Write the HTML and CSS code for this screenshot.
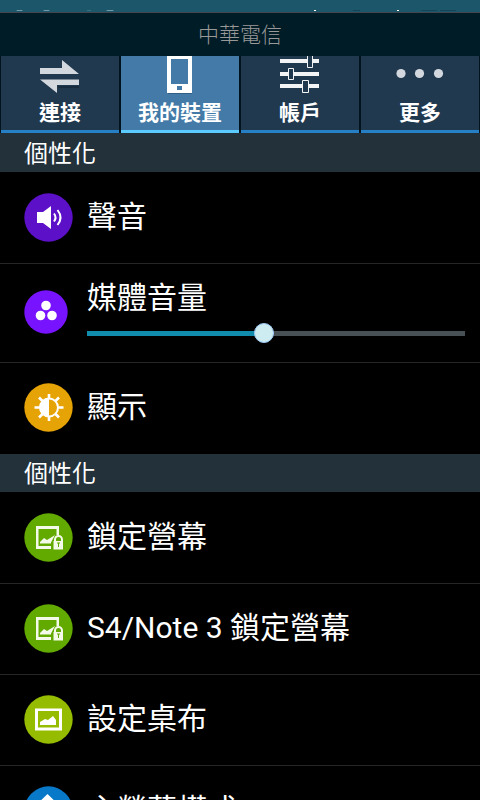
FILE: index.html
```html
<!DOCTYPE html>
<html lang="zh-Hant">
<head>
<meta charset="utf-8">
<meta name="viewport" content="width=device-width, initial-scale=1">
<title>設定</title>
<link rel="stylesheet" href="styles.css">
</head>
<body>
<div class="app">
  <div class="status" aria-hidden="true">
    <svg width="120" height="12" viewBox="0 0 120 12"><g fill="#a9c3cc"><path d="M17 10h5v1h-5zM44 10h5v1h-5zM107 10h6v1h-6z"/><path fill="#4d7f90" d="M16 10h7v1h-7zM43 10h7v1h-7zM87 10h4v1h-4zM106 10h8v1h-8z" opacity=".6"/></g></svg>
    <svg width="170" height="12" viewBox="0 0 170 12"><path fill="#fff" d="M4 10h2v1h-2zM87 10h2v1h-2z"/><path fill="#134556" d="M43 10h7v1h-7zM111 10h16v1h-16zM130 10h16v1h-16z"/></svg>
  </div>
  <header class="carrier">中華電信</header>
  <nav class="tabs">
    <button class="tab" type="button">
      <svg class="tab-icon" width="48" height="48" viewBox="0 0 48 48"><path fill="#101f30" opacity=".5" d="M22 39h21v2H22zM4 23h20v1H4z"/><path fill="#d3d8de" d="M4 21h22v-8L43 27H4zM43 38H21v8L4 32.500h39z"/></svg>
      <span>連接</span>
    </button>
    <button class="tab active" type="button">
      <svg class="tab-icon" width="48" height="48" viewBox="0 0 48 48"><path fill="#274b68" opacity=".6" d="M12 45h24v2H12z"/><path fill="#fff" fill-rule="evenodd" d="M11 6h25v40H11zM15 12v25h17V12zM21 39v4h5v-4z"/></svg>
      <span>我的裝置</span>
    </button>
    <button class="tab" type="button">
      <svg class="tab-icon" width="48" height="48" viewBox="0 0 48 48"><path fill="#f2f4f6" d="M4 12h39v4H4zM4 25h39v4H4zM4 37h39v4H4z"/><g fill="#20394f" stroke="#f2f4f6" stroke-width="1"><path d="M31.500 6.500h5v14h-5zM12.500 21.500h5v11h-5zM26.500 33.500h6v12h-6z"/></g></svg>
      <span>帳戶</span>
    </button>
    <button class="tab" type="button">
      <svg class="tab-icon" width="48" height="48" viewBox="0 0 48 48"><g fill="#d3d8de"><circle cx="5" cy="26.500" r="4.600"/><circle cx="23.500" cy="26.500" r="4.600"/><circle cx="42.500" cy="26.500" r="4.600"/></g></svg>
      <span>更多</span>
    </button>
  </nav>
  <main>
    <h2>個性化</h2>
    <ul class="list">
      <li><a class="row" href="#sound">
        <svg class="icon" width="49" height="49" viewBox="0 0 49 49"><circle cx="24.500" cy="24.500" r="24.200" fill="#5c10c8"/><path fill="#fff" d="M13 19h6l8-6v23l-8-6h-6z"/><path fill="none" stroke="#fff" stroke-width="2" d="M30 20.500q3 4 0 8M33.500 17q6 7.500 0 15"/></svg>
        <span class="label">聲音</span></a></li>
      <li><div class="row volume">
        <svg class="icon" width="49" height="44" viewBox="0 0 49 44"><circle cx="22" cy="22" r="21.700" fill="#7713ff"/><g fill="#fff"><circle cx="22" cy="15.500" r="4.800"/><circle cx="16.500" cy="25.500" r="4.800"/><circle cx="28" cy="25.500" r="4.800"/></g></svg>
        <div class="field"><label class="label" for="media">媒體音量</label><input id="media" type="range" min="0" max="15" value="7"></div>
      </div></li>
      <li><a class="row" href="#display">
        <svg class="icon" width="49" height="49" viewBox="0 0 49 49"><circle cx="24.500" cy="24.500" r="24.200" fill="#e6a305"/><path stroke="#fff" stroke-width="2.600" d="M25 11v5M25 33v5M10.500 24.500h5M34.500 24.500h5M15 14.500l4 4M31 30.500l4 4M35 14.500l-4 4M19 30.500l-4 4"/><circle cx="25" cy="24.500" r="9" fill="#e6a305" stroke="#fff" stroke-width="2"/><path fill="#fff" d="M25 15a9.500 9.500 0 0 0 0 19z"/></svg>
        <span class="label">顯示</span></a></li>
    </ul>
    <h2>個性化</h2>
    <ul class="list">
      <li><a class="row" href="#lock">
        <svg class="icon" width="49" height="49" viewBox="0 0 49 49"><circle cx="24.500" cy="24.500" r="24.200" fill="#62a900"/><g id="lock-art"><path fill="#f4faea" d="M12 13h23v9h-2.500v-6h-18v17H27v3H12z"/><path fill="#f4faea" d="M16 29l4-4 3 2 8-5-4 7.500v1H16z"/><path fill="none" stroke="#f4faea" stroke-width="2" d="M31 29v-2.500a3.500 3.500 0 0 1 7 0V29"/><path fill="#f4faea" fill-rule="evenodd" d="M29.500 28H39v8.500h-9.500zM33 30.500h1v3.500h1v-3.500h1v-1h-3z"/></g></svg>
        <span class="label">鎖定營幕</span></a></li>
      <li><a class="row" href="#note-lock">
        <svg class="icon" width="49" height="49" viewBox="0 0 49 49"><circle cx="24.500" cy="24.500" r="24.200" fill="#62a900"/><use href="#lock-art"/></svg>
        <span class="label">S4/Note 3 鎖定營幕</span></a></li>
      <li><a class="row" href="#wallpaper">
        <svg class="icon" width="49" height="49" viewBox="0 0 49 49"><circle cx="24.500" cy="24.500" r="24.200" fill="#96bc00"/><path fill="#fff" fill-rule="evenodd" d="M11 13.500h27v22H11zM14 16v16.500h21V16z"/><path fill="#fff" d="M16 30v-3l5-3 3 1 5-4 3 4v5z"/></svg>
        <span class="label">設定桌布</span></a></li>
      <li><a class="row" href="#home">
        <svg class="icon" width="49" height="49" viewBox="0 0 49 49"><circle cx="24.500" cy="24.500" r="24.200" fill="#0878c8"/><path fill="#fff" d="M23.500 8L38 22h-4v13H13V22H9z"/></svg>
        <span class="label">主螢幕模式</span></a></li>
    </ul>
  </main>
</div>
</body>
</html>
```
FILE: styles.css
```css
* {
  box-sizing: border-box;
}

body {
  margin: 0;
  background: #000;
  color: #fff;
  font-family: Roboto, "Noto Sans CJK TC", sans-serif;
}

.app {
  display: flex;
  flex-direction: column;
  height: 100vh;
  overflow: hidden;
}

.status {
  display: flex;
  flex: none;
  justify-content: space-between;
  background: #1c566b;
  border-bottom: 1px solid #42474f;
}

.status svg {
  display: block;
}

.carrier {
  flex: none;
  padding-top: 2px;
  background: #001c26;
  color: #999;
  font-size: 21px;
  font-weight: 300;
  line-height: 41px;
  text-align: center;
}

.tabs {
  display: grid;
  flex: none;
  grid-template-columns: repeat(4, 1fr);
  gap: 2px;
  padding: 0 1px;
  background: #001420;
}

.tab {
  display: flex;
  flex-direction: column;
  gap: 4px;
  align-items: center;
  justify-content: flex-end;
  height: 77px;
  padding: 0 0 3px;
  overflow: hidden;
  border: 0;
  border-bottom: 3px solid #2680c5;
  background: #20394f;
  color: #fff;
  font: inherit;
  font-size: 21px;
  font-weight: 700;
  line-height: 28px;
}

.tab.active {
  border-color: #5bcaff;
  background: #437aa7;
}

.tab-icon {
  flex: none;
}

main {
  flex: 1;
  min-height: 0;
  overflow: hidden;
}

h2 {
  margin: 0;
  padding: 2px 24px 0;
  background: #22313a;
  font-size: 24px;
  font-weight: 400;
  line-height: 36px;
}

.list {
  margin: 0;
  padding: 0 0 1px;
  list-style: none;
}

main > h2:first-child {
  padding-top: 3px;
}

li + li {
  border-top: 1px solid #262626;
}

.row {
  display: flex;
  gap: 14px;
  align-items: center;
  height: 90px;
  padding: 0 15px 1px 24px;
  color: inherit;
  text-decoration: none;
}

li:first-child .row {
  height: 91px;
  padding-bottom: 0;
}

.row.volume {
  height: 98px;
  padding-bottom: 2px;
}

.icon {
  flex: none;
}

.label {
  display: block;
  padding-bottom: 2px;
  font-size: 30px;
  line-height: 42px;
  white-space: nowrap;
}

.field {
  flex: 1;
  padding-bottom: 4px;
}

input[type="range"] {
  display: block;
  width: 100%;
  height: 20px;
  margin: 2px 0 0;
  appearance: none;
  background: linear-gradient(#128cad, #128cad) left / 47% 5px no-repeat,
    linear-gradient(#475054, #475054) center / 100% 5px no-repeat;
}

input[type="range"]::-webkit-slider-thumb {
  width: 20px;
  height: 20px;
  appearance: none;
  border: 1px solid #9cc9f5;
  border-radius: 50%;
  background: #cdecf2;
}
```
